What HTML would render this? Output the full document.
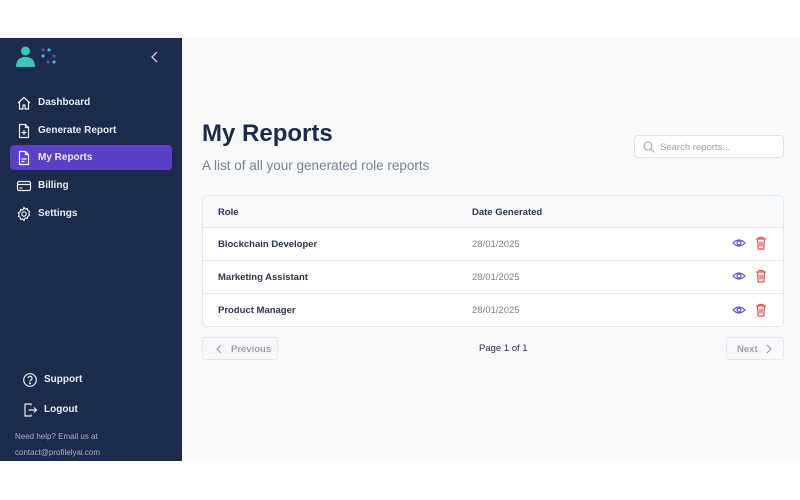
<!DOCTYPE html>
<html><head><meta charset="utf-8"><style>
*{box-sizing:border-box;margin:0;padding:0}
body{width:800px;height:500px;background:#fff;font-family:"Liberation Sans",sans-serif;position:relative;overflow:hidden}
.sb{position:absolute;left:0;top:38px;width:182px;height:423px;background:#1c2a4b}
.main{position:absolute;left:182px;top:38px;width:618px;height:423px;background:#f8f9fb}
.nav{position:absolute;left:10px;width:162px;height:25px;border-radius:4px;color:#e8ecf3;font-size:10px;font-weight:bold;display:flex;align-items:center}
.nav svg{position:absolute;left:6px}
.nav span{position:absolute;left:28px;top:7px}
.act{background:#5b3fc4}
.abs{position:absolute}
.card{position:absolute;left:202px;top:195px;width:582px;height:132px;background:#fff;border:1px solid #e3e6ec;border-radius:5px;overflow:hidden}
.row{position:absolute;left:0;width:582px;height:33px;border-top:1px solid #e6e8ee;font-size:9.5px}
.row .r{position:absolute;left:15px;top:11px;color:#2a3550;font-weight:bold}
.row .d{position:absolute;left:269px;top:11px;color:#7a8291}
.btn{position:absolute;border:1px solid #e6e8ee;border-radius:3px;color:#9aa1ad;font-size:9.5px;font-weight:bold;height:23px}
</style></head><body>
<div class="sb">
  <svg class="abs" style="left:15px;top:8px" width="44" height="22" viewBox="0 0 44 22">
    <circle cx="10.5" cy="5" r="4.5" fill="#3cc5b4"/>
    <path d="M1 21 Q1 11 10.5 11 Q20 11 20 21Z" fill="#3cc5b4"/>
    <circle cx="28" cy="4" r="1.6" fill="#6b46c1"/><circle cx="34" cy="4" r="1.6" fill="#3cc5b4"/>
    <circle cx="28" cy="10" r="1.6" fill="#3cc5b4"/><circle cx="39" cy="10" r="1.6" fill="#6b46c1"/>
    <circle cx="33" cy="16" r="1.6" fill="#6b46c1"/><circle cx="39" cy="16" r="1.6" fill="#3cc5b4"/>
  </svg>
  <svg class="abs" style="left:150px;top:13px" width="10" height="12" viewBox="0 0 10 12"><path d="M7 1L2 6l5 5" stroke="#cbd2de" stroke-width="1.3" fill="none"/></svg>
  <div class="nav" style="top:52px"><svg width="16" height="16" viewBox="0 0 16 16" fill="none" stroke="#e8ecf3" stroke-width="1.2"><path d="M2 8L8 2.5 14 8M3.5 6.8V14h3.5v-4h2v4h3.5V6.8"/></svg><span>Dashboard</span></div>
  <div class="nav" style="top:80px"><svg width="16" height="16" viewBox="0 0 16 16" fill="none" stroke="#e8ecf3" stroke-width="1.2"><path d="M3.5 1.5h6l3 3v10h-9z M9.5 1.5v3h3 M8 7v5 M5.5 9.5h5"/></svg><span>Generate Report</span></div>
  <div class="nav act" style="top:107px"><svg width="16" height="16" viewBox="0 0 16 16" fill="none" stroke="#fff" stroke-width="1.2"><path d="M3.5 1.5h6l3 3v10h-9z M9.5 1.5v3h3 M5.5 9h5 M5.5 11.5h3"/></svg><span>My Reports</span></div>
  <div class="nav" style="top:135px"><svg width="16" height="16" viewBox="0 0 16 16" fill="none" stroke="#e8ecf3" stroke-width="1.2"><rect x="1.5" y="3.5" width="13" height="9" rx="1.5"/><path d="M1.5 6.5h13 M3.5 10h3"/></svg><span>Billing</span></div>
  <div class="nav" style="top:163px"><svg width="16" height="16" viewBox="0 0 16 16" fill="none" stroke="#e8ecf3" stroke-width="1.2"><circle cx="8" cy="8" r="2.2"/><path d="M8 1.5l1.3 1.6 2-.5.5 2 1.8 1-.8 1.9.8 1.9-1.8 1-.5 2-2-.5L8 14.5l-1.3-1.6-2 .5-.5-2-1.8-1 .8-1.9-.8-1.9 1.8-1 .5-2 2 .5z"/></svg><span>Settings</span></div>
  <div class="nav" style="top:329px;left:16px"><svg width="16" height="16" viewBox="0 0 16 16" fill="none" stroke="#e8ecf3" stroke-width="1.2"><circle cx="8" cy="8" r="6.3"/><path d="M6.2 6.3a1.9 1.9 0 1 1 2.5 1.8c-.6.3-.7.7-.7 1.3"/><circle cx="8" cy="11.3" r=".5" fill="#e8ecf3"/></svg><span>Support</span></div>
  <div class="nav" style="top:359px;left:16px"><svg width="16" height="16" viewBox="0 0 16 16" fill="none" stroke="#e8ecf3" stroke-width="1.2"><path d="M9 3.5V2H3v12h6v-1.5 M6.5 8h8 M12 5.5L14.5 8 12 10.5"/></svg><span>Logout</span></div>
  <div class="abs" style="left:15px;top:391px;font-size:8px;color:#aab3c3;line-height:15.5px">Need help? Email us at<br>contact@profilelyai.com</div>
</div>
<div class="main"></div>
<div class="abs" style="left:202px;top:120px;font-size:24px;font-weight:bold;color:#1c2a4b">My Reports</div>
<div class="abs" style="left:202px;top:158px;font-size:13.5px;color:#7a8291">A list of all your generated role reports</div>
<div class="abs" style="left:634px;top:135px;width:150px;height:23px;background:#fff;border:1px solid #dfe2e8;border-radius:4px">
  <svg class="abs" style="left:8px;top:5px" width="12" height="12" viewBox="0 0 12 12" fill="none" stroke="#9aa1ad" stroke-width="1.1"><circle cx="5" cy="5" r="4"/><path d="M8 8l3.3 3.3"/></svg>
  <span class="abs" style="left:25px;top:6px;font-size:9.5px;color:#9aa1ad">Search reports...</span>
</div>
<div class="card">
  <div class="abs" style="left:0;top:0;width:582px;height:31px;background:#f8f9fb"></div>
  <div class="abs" style="left:15px;top:11px;font-size:9.5px;font-weight:bold;color:#2a3550">Role</div>
  <div class="abs" style="left:269px;top:11px;font-size:9.5px;font-weight:bold;color:#2a3550">Date Generated</div>
  <div class="row" style="top:31px"><span class="r">Blockchain Developer</span><span class="d">28/01/2025</span></div>
  <div class="row" style="top:64px"><span class="r">Marketing Assistant</span><span class="d">28/01/2025</span></div>
  <div class="row" style="top:97px"><span class="r">Product Manager</span><span class="d">28/01/2025</span></div>
</div>
<svg class="abs" style="left:729px;top:235px" width="40" height="90" viewBox="0 0 40 90">
  <g fill="none" stroke="#6b4fc8" stroke-width="1.2">
    <path d="M4 8Q10 2 16 8Q10 14 4 8Z"/><circle cx="10" cy="8" r="2"/>
    <path d="M4 41Q10 35 16 41Q10 47 4 41Z"/><circle cx="10" cy="41" r="2"/>
    <path d="M4 75Q10 69 16 75Q10 81 4 75Z"/><circle cx="10" cy="75" r="2"/>
  </g>
  <g fill="none" stroke="#e0524f" stroke-width="1.2">
    <path d="M27 4h10M30 4V2.5h4V4M28.5 4l.7 10h5.6l.7-10M31 6.5v5M33 6.5v5"/>
    <path d="M27 37h10M30 37v-1.5h4V37M28.5 37l.7 10h5.6l.7-10M31 39.5v5M33 39.5v5"/>
    <path d="M27 71h10M30 71v-1.5h4V71M28.5 71l.7 10h5.6l.7-10M31 73.5v5M33 73.5v5"/>
  </g>
</svg>
<div class="btn" style="left:202px;top:337px;width:76px"><svg class="abs" style="left:12px;top:6px" width="8" height="10" viewBox="0 0 8 10"><path d="M6 1L2 5l4 4" stroke="#9aa1ad" stroke-width="1.2" fill="none"/></svg><span class="abs" style="left:28px;top:6px">Previous</span></div>
<div class="abs" style="left:479px;top:343px;font-size:9.5px;color:#1f2a44">Page 1 of 1</div>
<div class="btn" style="left:726px;top:337px;width:58px"><span class="abs" style="left:10px;top:6px">Next</span><svg class="abs" style="left:38px;top:6px" width="8" height="10" viewBox="0 0 8 10"><path d="M2 1l4 4-4 4" stroke="#9aa1ad" stroke-width="1.2" fill="none"/></svg></div>
</body></html>
